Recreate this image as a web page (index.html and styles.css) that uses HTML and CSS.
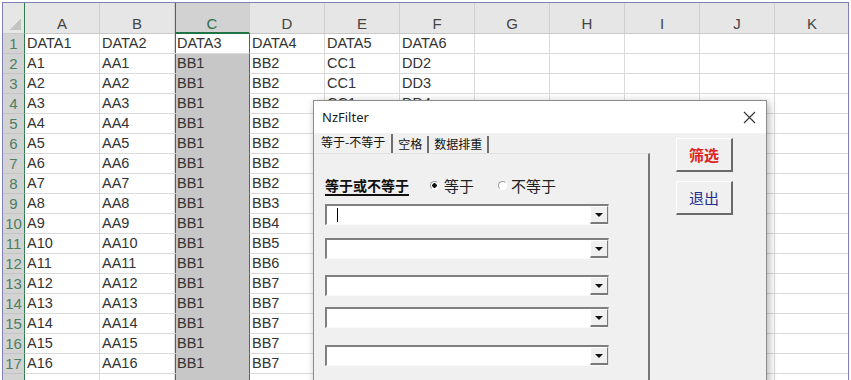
FILE: index.html
```html
<!DOCTYPE html>
<html>
<head>
    <meta charset="utf-8">
    <title>NzFilter</title>
    <link rel="stylesheet" href="styles.css">
</head>
<body>
    <div class="sheet">
        <div class="r head">
            <div class="corner"></div>
            <div class="h">A</div><div class="h">B</div><div class="h sel">C</div><div class="h">D</div><div class="h">E</div><div class="h">F</div><div class="h">G</div><div class="h">H</div><div class="h">I</div><div class="h">J</div><div class="h">K</div>
        </div>
        <div class="r"><div class="n">1</div><div>DATA1</div><div>DATA2</div><div class="sel act">DATA3</div><div>DATA4</div><div>DATA5</div><div>DATA6</div><div></div><div></div><div></div><div></div><div></div></div>
        <div class="r"><div class="n">2</div><div>A1</div><div>AA1</div><div class="sel">BB1</div><div>BB2</div><div>CC1</div><div>DD2</div><div></div><div></div><div></div><div></div><div></div></div>
        <div class="r"><div class="n">3</div><div>A2</div><div>AA2</div><div class="sel">BB1</div><div>BB2</div><div>CC1</div><div>DD3</div><div></div><div></div><div></div><div></div><div></div></div>
        <div class="r"><div class="n">4</div><div>A3</div><div>AA3</div><div class="sel">BB1</div><div>BB2</div><div>CC1</div><div>DD4</div><div></div><div></div><div></div><div></div><div></div></div>
        <div class="r"><div class="n">5</div><div>A4</div><div>AA4</div><div class="sel">BB1</div><div>BB2</div><div></div><div></div><div></div><div></div><div></div><div></div><div></div></div>
        <div class="r"><div class="n">6</div><div>A5</div><div>AA5</div><div class="sel">BB1</div><div>BB2</div><div></div><div></div><div></div><div></div><div></div><div></div><div></div></div>
        <div class="r"><div class="n">7</div><div>A6</div><div>AA6</div><div class="sel">BB1</div><div>BB2</div><div></div><div></div><div></div><div></div><div></div><div></div><div></div></div>
        <div class="r"><div class="n">8</div><div>A7</div><div>AA7</div><div class="sel">BB1</div><div>BB2</div><div></div><div></div><div></div><div></div><div></div><div></div><div></div></div>
        <div class="r"><div class="n">9</div><div>A8</div><div>AA8</div><div class="sel">BB1</div><div>BB3</div><div></div><div></div><div></div><div></div><div></div><div></div><div></div></div>
        <div class="r"><div class="n">10</div><div>A9</div><div>AA9</div><div class="sel">BB1</div><div>BB4</div><div></div><div></div><div></div><div></div><div></div><div></div><div></div></div>
        <div class="r"><div class="n">11</div><div>A10</div><div>AA10</div><div class="sel">BB1</div><div>BB5</div><div></div><div></div><div></div><div></div><div></div><div></div><div></div></div>
        <div class="r"><div class="n">12</div><div>A11</div><div>AA11</div><div class="sel">BB1</div><div>BB6</div><div></div><div></div><div></div><div></div><div></div><div></div><div></div></div>
        <div class="r"><div class="n">13</div><div>A12</div><div>AA12</div><div class="sel">BB1</div><div>BB7</div><div></div><div></div><div></div><div></div><div></div><div></div><div></div></div>
        <div class="r"><div class="n">14</div><div>A13</div><div>AA13</div><div class="sel">BB1</div><div>BB7</div><div></div><div></div><div></div><div></div><div></div><div></div><div></div></div>
        <div class="r"><div class="n">15</div><div>A14</div><div>AA14</div><div class="sel">BB1</div><div>BB7</div><div></div><div></div><div></div><div></div><div></div><div></div><div></div></div>
        <div class="r"><div class="n">16</div><div>A15</div><div>AA15</div><div class="sel">BB1</div><div>BB7</div><div></div><div></div><div></div><div></div><div></div><div></div><div></div></div>
        <div class="r"><div class="n">17</div><div>A16</div><div>AA16</div><div class="sel">BB1</div><div>BB7</div><div></div><div></div><div></div><div></div><div></div><div></div><div></div></div>
        <div class="r"><div class="n"></div><div></div><div></div><div class="sel"></div><div></div><div></div><div></div><div></div><div></div><div></div><div></div><div></div></div>
    </div>

    <div class="dialog">
        <div class="titlebar">
            <span class="title">NzFilter</span>
            <svg class="close" width="13" height="13" viewBox="0 0 13 13">
                <path d="M1 1 L12 12 M12 1 L1 12" stroke="#333" stroke-width="1.1" fill="none"/>
            </svg>
        </div>
        <div class="body">
            <div class="left">
                <div class="tabs">
                    <span class="tab active">等于-不等于</span>
                    <span class="tab">空格</span>
                    <span class="tab">数据排重</span>
                </div>
                <div class="page">
                    <div class="mode">
                        <span class="label">等于或不等于</span>
                        <span class="radio on"></span><span class="opt">等于</span>
                        <span class="radio second"></span><span class="opt">不等于</span>
                    </div>
                    <div class="combos">
                        <div class="combo"><span class="caret"></span><span class="drop"></span></div>
                        <div class="combo"><span class="drop"></span></div>
                        <div class="combo"><span class="drop"></span></div>
                        <div class="combo"><span class="drop"></span></div>
                        <div class="combo"><span class="drop"></span></div>
                    </div>
                </div>
            </div>
            <div class="actions">
                <button class="btn filter">筛选</button>
                <button class="btn quit">退出</button>
            </div>
        </div>
    </div>
</body>
</html>
```

FILE: styles.css
```css
html, body {
    margin: 0;
    padding: 0;
    height: 380px;
    overflow: hidden;
    background-color: #fff;
}

body {
    font-family: "Liberation Sans", Arial, sans-serif;
}

/* spreadsheet */

.sheet {
    margin: 2px 0 0 2px;
    width: 845px;
    height: 378px;
    border: 1px solid #7d81b3;
    border-bottom: none;
    overflow: hidden;
}

.r {
    display: grid;
    grid-template-columns: 22px repeat(11, 75px);
    height: 20px;
}

.r > div {
    box-sizing: border-box;
    border-right: 1px solid #dadada;
    border-bottom: 1px solid #dadada;
    padding-left: 2px;
    font-size: 14.5px;
    line-height: 19px;
    color: #333;
    white-space: nowrap;
    overflow: hidden;
}

.r.head {
    height: 31px;
}

.r.head > div {
    background-color: #e6e6e6;
    border-bottom: 1px solid #c8c8c8;
    border-right: 1px solid #d0d0d0;
    padding: 11px 0 0 0;
    text-align: center;
    font-size: 15px;
    color: #444;
}

.r.head > .corner {
    background: linear-gradient(135deg, transparent 50%, #c3c3c3 50%) no-repeat right 3px bottom 3px / 11px 11px, #e6e6e6;
    border-right: 1px solid #2f7a4d;
}

.r.head > .h.sel {
    background-color: #d2d2d2;
    color: #2f6e48;
    border-bottom: 2px solid #217346;
}

.r > .n {
    background-color: #d3d3d3;
    border-right: 1px solid #2f7a4d;
    border-bottom: 1px solid #c4c4c4;
    padding: 0;
    text-align: center;
    font-size: 15px;
    color: #4b7f5f;
}

.r > .sel {
    background-color: #c7c7c7;
    border-right: 1px solid #2f7a4d;
    box-shadow: inset 1px 0 0 #2f7a4d;
    border-bottom-color: #c7c7c7;
}

.r > .sel.act {
    background-color: #fff;
    border-bottom-color: #dadada;
}

/* dialog */

.dialog {
    position: absolute;
    left: 313px;
    top: 100px;
    width: 454px;
    height: 300px;
    box-sizing: border-box;
    background-color: #f0f0f0;
    border: 1px solid #8c8c8c;
    box-shadow: 2px 2px 8px rgba(0, 0, 0, 0.3);
    font-family: "Noto Sans CJK SC", sans-serif;
}

.titlebar {
    height: 32px;
    background-color: #fff;
    display: flex;
    align-items: center;
    justify-content: space-between;
    padding: 0 10px 0 8px;
}

.title {
    font-family: "Noto Sans", sans-serif;
    font-size: 13px;
    color: #1a1a1a;
}

.body {
    display: flex;
}

.left {
    width: 336px;
}

.tabs {
    display: flex;
    align-items: flex-end;
    height: 20px;
    padding-left: 7px;
    font-size: 12px;
    color: #111;
}

.tab {
    height: 17px;
    line-height: 16px;
    padding: 0 5px;
    border-right: 2px solid #6e6e6e;
}

.tab.active {
    height: 19px;
    padding-left: 0;
    padding-right: 6px;
}

.page {
    height: 246px;
    box-sizing: border-box;
    border-top: 1px solid #e2e2e2;
    border-right: 2px solid #767676;
    padding: 21px 0 0 11px;
}

.mode {
    display: flex;
    align-items: center;
    height: 20px;
    margin-bottom: 9px;
}

.label {
    font-size: 14px;
    font-weight: bold;
    color: #111;
    text-decoration: underline;
    text-decoration-thickness: 1.5px;
    text-underline-offset: 3px;
}

.radio {
    width: 9px;
    height: 9px;
    box-sizing: border-box;
    border-radius: 50%;
    border: 1px solid;
    border-color: #9a9a9a #fff #fff #9a9a9a;
    background-color: #fff;
    margin: 0 5px 0 21px;
}

.radio.on {
    background: radial-gradient(circle, #111 0 2px, #fff 2.5px);
}

.radio.second {
    margin-left: 24px;
    margin-right: 4px;
}

.opt {
    font-size: 15px;
    color: #222;
}

.combos {
    display: flex;
    flex-direction: column;
}

.combo {
    width: 284px;
    height: 21px;
    box-sizing: border-box;
    background-color: #fff;
    border-top: 2px solid #7f7f7f;
    border-left: 2px solid #7f7f7f;
    border-right: 1px solid #e2e2e2;
    border-bottom: 1px solid #fafafa;
    display: flex;
    align-items: center;
}

.combo:nth-child(2) { margin-top: 13px; }
.combo:nth-child(3) { margin-top: 16px; }
.combo:nth-child(4) { margin-top: 11px; }
.combo:nth-child(5) { margin-top: 17px; }

.caret {
    width: 1px;
    height: 14px;
    margin-left: 10px;
    background-color: #000;
}

.drop {
    margin-left: auto;
    width: 18px;
    height: 18px;
    box-sizing: border-box;
    background-color: #f0f0f0;
    border-top: 1px solid #fff;
    border-left: 1px solid #fff;
    border-right: 1px solid #7a7a7a;
    border-bottom: 2px solid #7a7a7a;
    display: flex;
    align-items: center;
    justify-content: center;
}

.drop::after {
    content: "";
    border-left: 4px solid transparent;
    border-right: 4px solid transparent;
    border-top: 4px solid #111;
}

.actions {
    display: flex;
    flex-direction: column;
    gap: 9px;
    padding: 5px 0 0 26px;
}

.btn {
    width: 57px;
    height: 34px;
    box-sizing: border-box;
    background-color: #f0f0f0;
    border-top: 1px solid #fff;
    border-left: 1px solid #fff;
    border-right: 2px solid #6a6a6a;
    border-bottom: 2px solid #6a6a6a;
    font-family: "Noto Sans CJK SC", sans-serif;
    font-size: 15px;
    padding: 0;
    cursor: pointer;
}

.btn.filter {
    color: #e0201c;
    font-weight: bold;
}

.btn.quit {
    color: #1f2d8f;
}
```
